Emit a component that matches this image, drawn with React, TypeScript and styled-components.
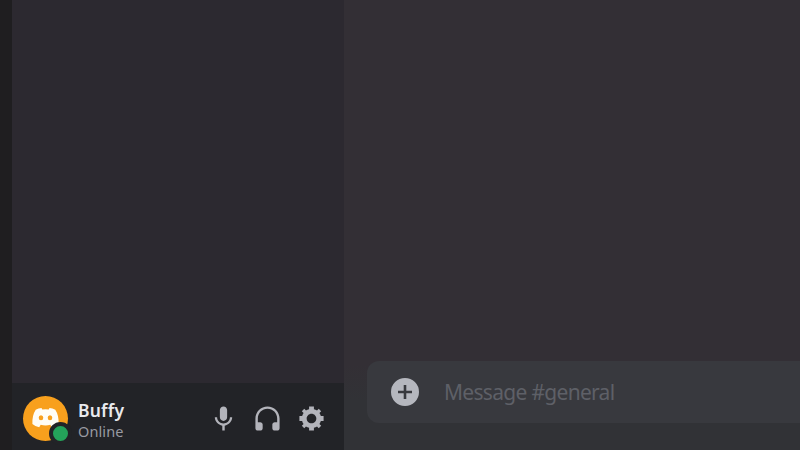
import React from "react";
import styled, { createGlobalStyle } from "styled-components";

const GlobalStyle = createGlobalStyle`
  * { box-sizing: border-box; }
  body { margin: 0; background: #313236; font-family: "Noto Sans", "Open Sans", sans-serif; }
`;

const Shell = styled.div`
  display: grid;
  grid-template-columns: 12px 332px 1fr;
  width: 800px;
  height: 450px;
  overflow: hidden;
`;

const GuildRail = styled.nav`
  background: #1f1e20;
`;

const Sidebar = styled.aside`
  display: flex;
  flex-direction: column;
  background: #2c2930;
`;

const Channels = styled.div`
  flex: 1;
`;

const UserPanel = styled.section`
  display: flex;
  align-items: center;
  height: 67px;
  padding: 4px 18.5px 0 11px;
  background: #222327;
`;

const Avatar = styled.div`
  position: relative;
  display: flex;
  align-items: center;
  justify-content: center;
  width: 45px;
  height: 45px;
  border-radius: 50%;
  background: #f8a01d;
  color: #fffdf5;
`;

const Logo = styled.svg`
  display: block;
  width: 27px;
  height: 21px;
  margin-bottom: 2px;
  fill: currentColor;
`;

const Status = styled.span`
  position: absolute;
  right: -4px;
  bottom: -4px;
  width: 23px;
  height: 23px;
  border: 4px solid #222327;
  border-radius: 50%;
  background: #24a35a;
`;

const Identity = styled.div`
  display: flex;
  flex: 1;
  flex-direction: column;
  margin-left: 10px;
  padding-top: 3px;
`;

const UserName = styled.span`
  color: #e9eaee;
  font-size: 17.5px;
  font-weight: 600;
  line-height: 21px;
  letter-spacing: 0.2px;
`;

const Presence = styled.span`
  color: #989aa2;
  font-size: 14.5px;
  line-height: 20px;
  letter-spacing: 0.1px;
`;

const Controls = styled.div`
  display: flex;
  gap: 15px;
`;

const IconButton = styled.button`
  display: flex;
  width: 29px;
  height: 29px;
  padding: 0;
  border: 0;
  background: none;
  color: #b3b4bb;
`;

const Glyph = styled.svg`
  display: block;
  width: 29px;
  height: 29px;
  fill: currentColor;
`;

const Chat = styled.main`
  display: flex;
  flex-direction: column;
  justify-content: flex-end;
  padding: 0 0 27px 23px;
  background: linear-gradient(#332f35 0, #332f35 365px, #313236 400px);
`;

const Composer = styled.div`
  display: flex;
  align-items: center;
  height: 62px;
  padding-left: 24px;
  border-radius: 12px 0 0 12px;
  background: #38393e;
`;

const AttachButton = styled(IconButton)`
  width: 28px;
  height: 28px;
  color: #b5b7be;
`;

const AttachGlyph = styled(Glyph)`
  width: 28px;
  height: 28px;
`;

const Placeholder = styled.span`
  margin-left: 25px;
  color: #5e6067;
  font-size: 21px;
  line-height: 28px;
  letter-spacing: -0.7px;
`;

const controls = [
  {
    label: "Mute",
    d: "M15 11C15 12.66 13.66 14 12 14C10.34 14 9 12.66 9 11V5C9 3.34 10.34 2 12 2C13.66 2 15 3.34 15 5V11ZM12 16.1C14.76 16.1 17.3 14 17.3 11H19.2C19.2 14.42 16.28 17.24 13 17.9V22H11V17.9C7.72 17.23 4.8 14.41 4.8 11H6.7C6.7 14 9.24 16.1 12 16.1Z",
  },
  {
    label: "Deafen",
    d: "M12 2C6.486 2 2 6.488 2 12V20C2 21.107 2.895 22 4 22H6C7.104 22 8 21.107 8 20V17C8 15.899 7.104 15 6 15H4V12C4 7.591 7.589 4 12 4C16.411 4 20 7.591 20 12V15H18C16.896 15 16 15.899 16 17V20C16 21.107 16.896 22 18 22H20C21.104 22 22 21.107 22 20V12C22 6.488 17.514 2 12 2Z",
  },
  {
    label: "User Settings",
    d: "M19.738 10H22V14H19.739C19.498 14.931 19.1 15.798 18.565 16.564L20 18L18 20L16.565 18.564C15.797 19.099 14.932 19.498 14 19.738V22H10V19.738C9.069 19.498 8.203 19.099 7.436 18.564L6 20L4 18L5.436 16.564C4.901 15.799 4.502 14.932 4.262 14H2V10H4.262C4.502 9.068 4.9 8.202 5.436 7.436L4 6L6 4L7.436 5.436C8.202 4.9 9.068 4.502 10 4.262V2H14V4.261C14.932 4.502 15.797 4.9 16.565 5.435L18 4L20 6L18.564 7.436C19.099 8.202 19.498 9.069 19.738 10ZM12 16C14.209 16 16 14.209 16 12C16 9.791 14.209 8 12 8C9.791 8 8 9.791 8 12C8 14.209 9.791 16 12 16Z",
  },
];

export default function App() {
  return (
    <>
      <GlobalStyle />
      <Shell>
        <GuildRail />
        <Sidebar>
          <Channels />
          <UserPanel>
            <Avatar>
              <Logo viewBox="0 0 27 21">
                <path
                  fillRule="evenodd"
                  d="M9.5 1L10.3 2.5Q13.5 2 16.7 2.5L17.5 1Q20.5 1.3 23.3 2.8Q27 8.5 26.6 17Q24 19.2 19.8 20.3L18.3 17.8Q13.5 19 8.7 17.8L7.2 20.3Q3 19.2 .4 17Q0 8.5 3.7 2.8Q6.5 1.3 9.5 1ZM9 8.3A2.3 2.5 0 1 0 9 13.3A2.3 2.5 0 1 0 9 8.3ZM18 8.3A2.3 2.5 0 1 0 18 13.3A2.3 2.5 0 1 0 18 8.3Z"
                />
              </Logo>
              <Status />
            </Avatar>
            <Identity>
              <UserName>Buffy</UserName>
              <Presence>Online</Presence>
            </Identity>
            <Controls>
              {controls.map((c) => (
                <IconButton key={c.label} aria-label={c.label}>
                  <Glyph viewBox="0 0 24 24">
                    <path fillRule="evenodd" d={c.d} />
                  </Glyph>
                </IconButton>
              ))}
            </Controls>
          </UserPanel>
        </Sidebar>
        <Chat>
          <Composer>
            <AttachButton aria-label="Attach">
              <AttachGlyph viewBox="0 0 28 28">
                <path
                  fillRule="evenodd"
                  d="M14 0A14 14 0 1 0 14 28A14 14 0 1 0 14 0ZM12.7 7V12.7H7V15.3H12.7V21H15.3V15.3H21V12.7H15.3V7Z"
                />
              </AttachGlyph>
            </AttachButton>
            <Placeholder>Message #general</Placeholder>
          </Composer>
        </Chat>
      </Shell>
    </>
  );
}
